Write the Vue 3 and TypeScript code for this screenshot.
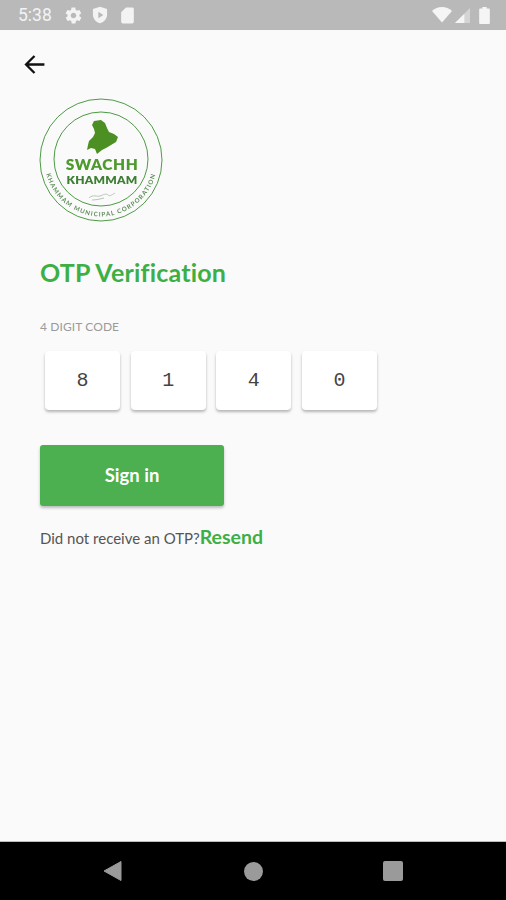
<script setup lang="ts">
const digits: string[] = ['8', '1', '4', '0']
</script>

<template>
  <div class="screen">
    <header class="status-bar">
      <span class="time">5:38</span>
      <svg class="status-icon" viewBox="0 0 24 24" width="19" height="19">
        <path fill="#f3f3f3" d="M19.4 13c.1-.3.1-.7.1-1s0-.7-.1-1l2.100-1.600c.2-.2.2-.4.1-.6l-2-3.500c-.1-.2-.4-.3-.6-.2l-2.500 1c-.5-.4-1.100-.7-1.700-1l-.4-2.600c0-.3-.2-.5-.5-.5h-4c-.3 0-.5.2-.5.4l-.4 2.700c-.6.2-1.100.6-1.700 1l-2.500-1c-.2-.1-.5 0-.6.2l-2 3.500c-.1.2-.1.5.1.6L4.600 11c0 .3-.1.7-.1 1s0 .7.1 1l-2.100 1.600c-.2.2-.2.4-.1.6l2 3.500c.1.2.4.3.6.2l2.500-1c.5.4 1.100.7 1.700 1l.4 2.600c0 .3.2.5.5.5h4c.3 0 .5-.2.5-.4l.4-2.700c.6-.2 1.200-.6 1.700-1l2.500 1c.2.1.5 0 .6-.2l2-3.500c.1-.2.1-.5-.1-.6L19.400 13zM12 15.500c-1.900 0-3.500-1.600-3.500-3.500s1.600-3.500 3.500-3.500 3.500 1.600 3.500 3.500-1.600 3.500-3.500 3.500z" />
      </svg>
      <svg class="status-icon" viewBox="0 0 24 24" width="20" height="20">
        <path fill="#f3f3f3" fill-rule="evenodd" d="M12 2 3.500 4.800v6.600c0 5 3.600 9.200 8.500 10.600 4.900-1.400 8.500-5.600 8.500-10.600V4.800L12 2zM10 8l6 4-6 4V8z" />
      </svg>
      <svg class="status-icon" viewBox="0 0 24 24" width="19" height="19">
        <path fill="#f3f3f3" d="M18 2h-8L4 8v12c0 1.100.9 2 2 2h12c1.100 0 2-.9 2-2V4c0-1.100-.9-2-2-2z" />
      </svg>
      <span class="spacer"></span>
      <svg viewBox="0 0 20 16" width="20" height="16" class="wifi">
        <path fill="#f5f5f5" d="M10 15.500 0 4C2.800 1.500 6.200 0 10 0s7.200 1.500 10 4L10 15.500z" />
      </svg>
      <svg viewBox="0 0 16 16" width="15" height="15" class="signal">
        <path fill="#d4d4d4" d="M16 0v16H0L16 0z" />
        <path fill="#f5f5f5" d="M10 6v10H0l10-10z" />
      </svg>
      <svg viewBox="0 0 10 16" width="11" height="17" class="battery">
        <path fill="#f5f5f5" d="M3 0h4v1.500h2c.6 0 1 .4 1 1V15c0 .6-.4 1-1 1H1c-.6 0-1-.4-1-1V2.500c0-.6.4-1 1-1h2V0z" />
      </svg>
    </header>

    <main class="content">
      <button class="back" aria-label="Back">
        <svg viewBox="0 0 24 24" width="29" height="29">
          <path fill="none" stroke="#111" stroke-width="1.900" d="M20.200 12H5.500M12 5 5 12l7 7" />
        </svg>
      </button>

      <div class="form">
        <svg class="logo" viewBox="0 0 124 124" width="124" height="124">
          <defs>
            <path id="ring-text" d="M6.400 72A56.500 56.500 0 0 0 117.600 72" />
          </defs>
          <circle cx="62" cy="62" r="61" fill="none" stroke="#4d9a45" stroke-width="1" />
          <circle cx="62" cy="61" r="47" fill="none" stroke="#4d9a45" stroke-width="1" />
          <path fill="#4c8f22" d="M55 23 62 22 66 25 68 30 70 34 75 36 79 39 77 44 72 47 67 50 63 52 58 56 56 51 52 50 48 52 49 47 50 43 54 39 56 35 55 31 53 27z" />
          <text class="logo-swachh" x="63" y="72" text-anchor="middle">SWACHH</text>
          <text class="logo-khammam" x="63" y="85.500" text-anchor="middle">KHAMMAM</text>
          <path d="M50 100c4-4 8-1 11-2s6-3 8-1 5-1 7-2M53 102c4 0 8-1 12-2" fill="none" stroke="#b9c4b6" stroke-width="1" />
          <text class="logo-ring">
            <textPath href="#ring-text" startOffset="50%" text-anchor="middle">KHAMMAM MUNICIPAL CORPORATION</textPath>
          </text>
        </svg>

        <h1 class="title">OTP Verification</h1>
        <label class="code-label">4 DIGIT CODE</label>

        <div class="digits">
          <div v-for="(digit, i) in digits" :key="i" class="digit">{{ digit }}</div>
        </div>

        <button class="sign-in">Sign in</button>

        <p class="resend-row">
          <span>Did not receive an OTP?</span><a class="resend">Resend</a>
        </p>
      </div>
    </main>

    <footer class="nav-bar">
      <svg viewBox="0 0 20 22" width="20" height="22">
        <path fill="#9a9a9a" stroke="#9a9a9a" stroke-width="1" stroke-linejoin="round" d="M18 1.500v19L1 11z" />
      </svg>
      <svg viewBox="0 0 20 20" width="19" height="19">
        <circle cx="10" cy="10" r="10" fill="#9a9a9a" />
      </svg>
      <svg viewBox="0 0 20 20" width="20" height="20">
        <rect width="20" height="20" rx="2" fill="#9a9a9a" />
      </svg>
    </footer>
  </div>
</template>

<style>
html, body {
  margin: 0;
  background: #fafafa;
}
</style>

<style scoped>
.screen {
  width: 506px;
  height: 900px;
  display: flex;
  flex-direction: column;
  background: #fafafa;
  font-family: Lato, "Open Sans", sans-serif;
  overflow: hidden;
}
.status-bar {
  height: 30px;
  flex: none;
  display: flex;
  align-items: center;
  background: #b9b9b9;
  padding: 0 16px 0 18px;
  box-sizing: border-box;
}
.time {
  font-family: Roboto, sans-serif;
  font-size: 17.500px;
  color: #f3f3f3;
  margin-right: 12px;
}
.status-icon {
  margin-right: 7.500px;
}
.spacer {
  flex: 1;
}
.wifi {
  margin-right: 3px;
}
.signal {
  margin-right: 9px;
}
.content {
  flex: 1;
  display: flex;
  flex-direction: column;
  padding: 20px 40px 0;
}
.back {
  align-self: flex-start;
  display: flex;
  margin: 0 0 0 -20px;
  padding: 0;
  border: 0;
  background: none;
}
.form {
  display: flex;
  flex-direction: column;
  align-items: flex-start;
}
.logo {
  display: block;
  margin-top: 19px;
  margin-left: -1px;
  filter: blur(0.4px);
}
.logo-swachh {
  font: 800 15.500px Lato, sans-serif;
  fill: #4f9a2f;
  letter-spacing: 0.6px;
}
.logo-khammam {
  font: 800 12px Lato, sans-serif;
  fill: #3f7f35;
  letter-spacing: 0.2px;
}
.logo-ring {
  font: 700 6.200px Lato, sans-serif;
  fill: #5d8d58;
  letter-spacing: 1.100px;
}
.title {
  margin: 33px 0 0;
  font-size: 25px;
  line-height: 34px;
  font-weight: 700;
  letter-spacing: 0.2px;
  color: #3daf45;
}
.code-label {
  margin-top: 31px;
  font-size: 12px;
  line-height: 14px;
  letter-spacing: 0.1px;
  color: #9a9a9a;
}
.digits {
  display: flex;
  gap: 10.700px;
  margin: 17px 0 0 5px;
}
.digit {
  width: 75px;
  height: 59px;
  display: flex;
  align-items: center;
  justify-content: center;
  background: #fff;
  border-radius: 4px;
  box-shadow: 0 2px 3px rgba(0, 0, 0, 0.28);
  font-family: "Liberation Mono", monospace;
  font-size: 20px;
  color: #444;
}
.sign-in {
  width: 184px;
  height: 61px;
  margin-top: 35px;
  padding: 0 0 2px;
  border: 0;
  border-radius: 3px;
  background: #4caf50;
  box-shadow: 0 2px 3px rgba(0, 0, 0, 0.25);
  color: #fff;
  font-family: inherit;
  font-size: 18.500px;
  font-weight: 700;
}
.resend-row {
  display: flex;
  align-items: baseline;
  margin: 19px 0 0;
  height: 24px;
  font-size: 15px;
  color: #555;
}
.resend {
  font-size: 19.500px;
  font-weight: 700;
  color: #3daf45;
}
.nav-bar {
  height: 59px;
  flex: none;
  display: flex;
  align-items: center;
  justify-content: space-between;
  padding: 0 103px;
  background: #000;
  border-top: 1px solid #bdbdbd;
  box-sizing: border-box;
}
</style>
